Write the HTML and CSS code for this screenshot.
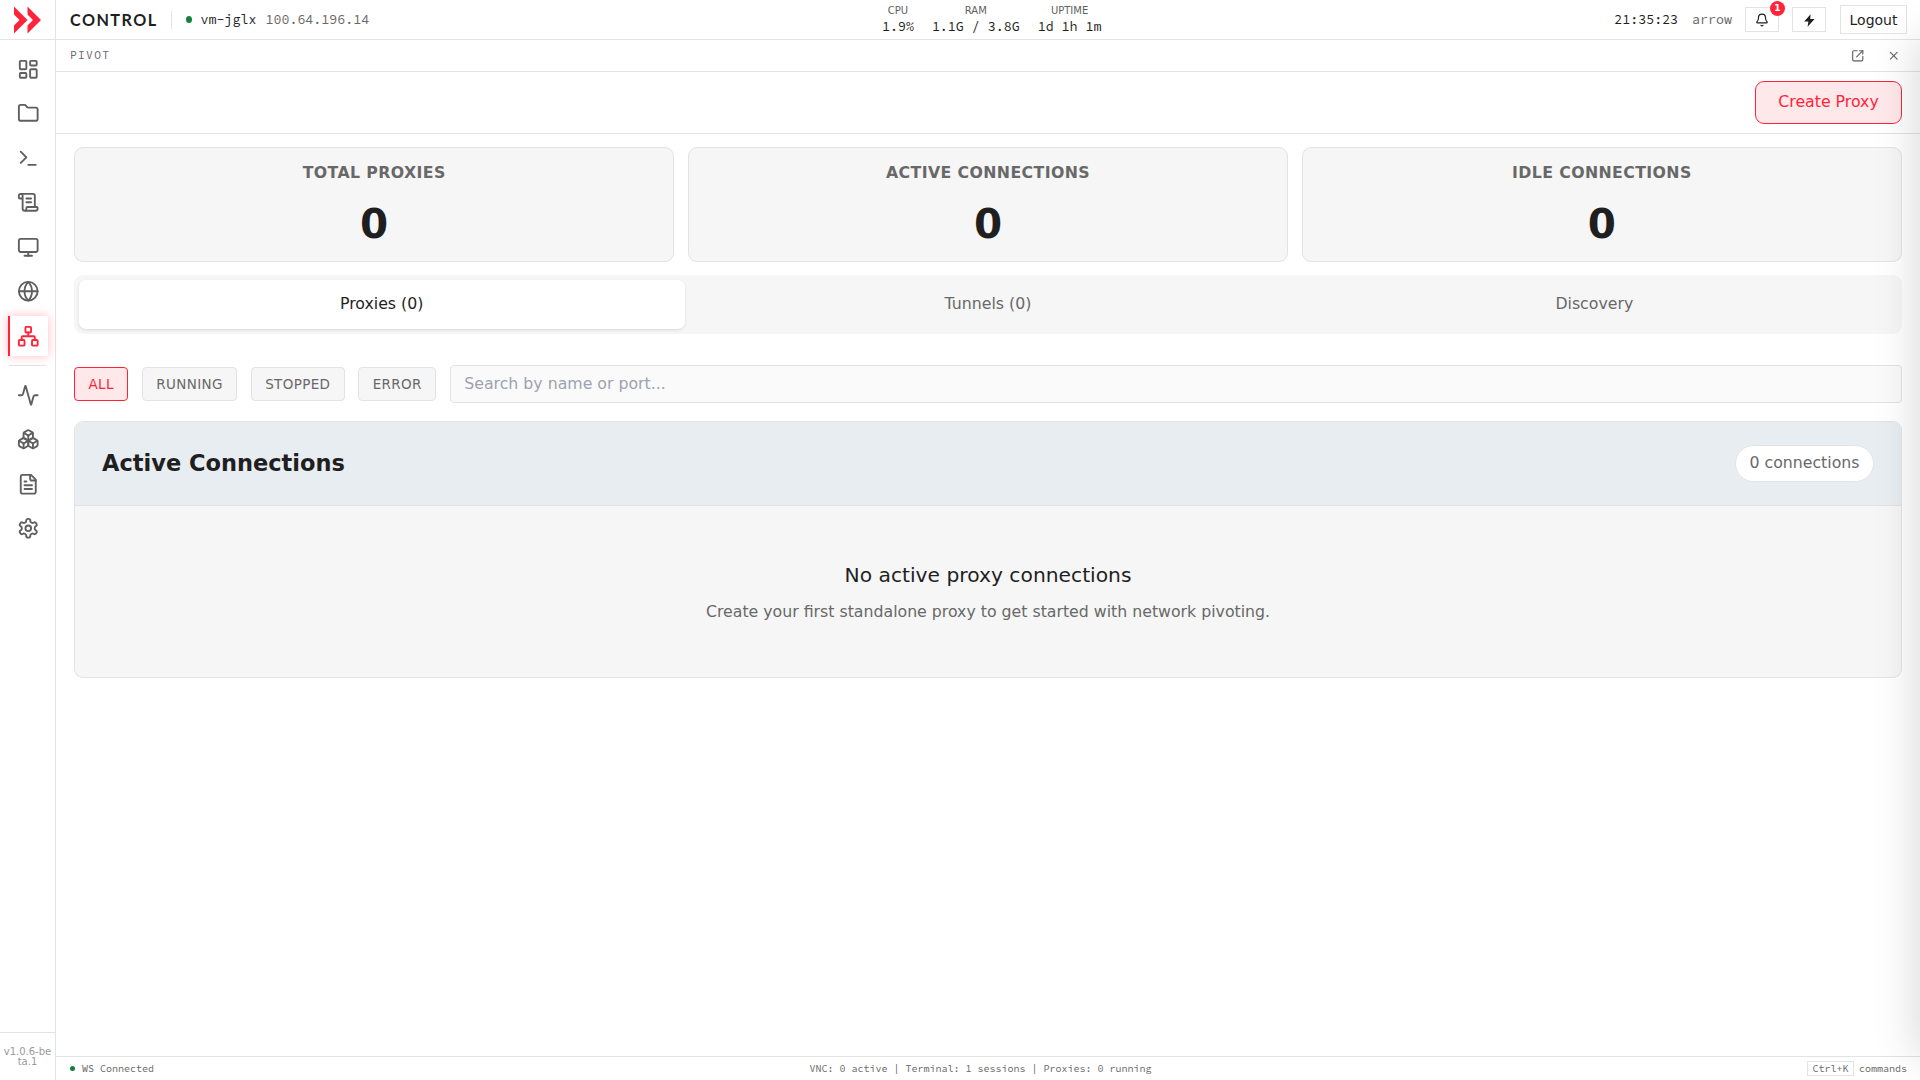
FILE: index.html
```html
<!DOCTYPE html>
<html lang="en">
<head>
    <meta charset="UTF-8">
    <meta name="viewport" content="width=device-width, initial-scale=1.0">
    <title>Control - Pivot</title>
    <link rel="stylesheet" href="styles.css">
</head>
<body>

<div class="app">
    <aside class="sidebar">
        <div class="logo">
            <svg width="28" height="28" viewBox="0 0 28 28" fill="#ff2439"><path d="M0 0.5L13.5 14L0 27.5V19.5L5.5 14L0 8.5Z"/><path d="M13.5 0.5L27 14L13.5 27.5V19.5L19 14L13.5 8.5Z"/></svg>
        </div>
        <nav class="nav">
            <a class="nav-item"><svg class="icon" viewBox="0 0 24 24"><rect width="7" height="9" x="3" y="3" rx="1"/><rect width="7" height="5" x="14" y="3" rx="1"/><rect width="7" height="9" x="14" y="12" rx="1"/><rect width="7" height="5" x="3" y="16" rx="1"/></svg></a>
            <a class="nav-item"><svg class="icon" viewBox="0 0 24 24"><path d="M20 20a2 2 0 0 0 2-2V8a2 2 0 0 0-2-2h-7.9a2 2 0 0 1-1.69-.9L9.6 3.9A2 2 0 0 0 7.93 3H4a2 2 0 0 0-2 2v13a2 2 0 0 0 2 2Z"/></svg></a>
            <a class="nav-item"><svg class="icon" viewBox="0 0 24 24"><path d="m4 17 6-6-6-6"/><path d="M12 19h8"/></svg></a>
            <a class="nav-item"><svg class="icon" viewBox="0 0 24 24"><path d="M15 12h-5"/><path d="M15 8h-5"/><path d="M19 17V5a2 2 0 0 0-2-2H4"/><path d="M8 21h12a2 2 0 0 0 2-2v-1a1 1 0 0 0-1-1H11a1 1 0 0 0-1 1v1a2 2 0 1 1-4 0V5a2 2 0 1 0-4 0v2a1 1 0 0 0 1 1h3"/></svg></a>
            <a class="nav-item"><svg class="icon" viewBox="0 0 24 24"><rect width="20" height="14" x="2" y="3" rx="2"/><path d="M8 21h8"/><path d="M12 17v4"/></svg></a>
            <a class="nav-item"><svg class="icon" viewBox="0 0 24 24"><circle cx="12" cy="12" r="10"/><path d="M12 2a14.5 14.5 0 0 0 0 20 14.5 14.5 0 0 0 0-20"/><path d="M2 12h20"/></svg></a>
            <a class="nav-item active"><svg class="icon" viewBox="0 0 24 24"><rect x="16" y="16" width="6" height="6" rx="1"/><rect x="2" y="16" width="6" height="6" rx="1"/><rect x="9" y="2" width="6" height="6" rx="1"/><path d="M5 16v-3a1 1 0 0 1 1-1h12a1 1 0 0 1 1 1v3"/><path d="M12 12V8"/></svg></a>
            <div class="nav-divider"></div>
            <a class="nav-item"><svg class="icon" viewBox="0 0 24 24"><path d="M22 12h-2.48a2 2 0 0 0-1.93 1.46l-2.35 8.36a.25.25 0 0 1-.48 0L9.24 2.18a.25.25 0 0 0-.48 0l-2.35 8.36A2 2 0 0 1 4.49 12H2"/></svg></a>
            <a class="nav-item"><svg class="icon" viewBox="0 0 24 24"><path d="M2.97 12.92A2 2 0 0 0 2 14.63v3.24a2 2 0 0 0 .97 1.71l3 1.8a2 2 0 0 0 2.06 0L12 19v-5.5l-5-3-4.03 2.42Z"/><path d="m7 16.5-4.74-2.85"/><path d="m7 16.5 5-3"/><path d="M7 16.5v5.17"/><path d="M12 13.5V19l3.97 2.38a2 2 0 0 0 2.06 0l3-1.8a2 2 0 0 0 .97-1.71v-3.24a2 2 0 0 0-.97-1.71L17 10.5l-5 3Z"/><path d="m17 16.5-5-3"/><path d="m17 16.5 4.74-2.85"/><path d="M17 16.5v5.17"/><path d="M7.97 4.42A2 2 0 0 0 7 6.13v4.37l5 3 5-3V6.13a2 2 0 0 0-.97-1.71l-3-1.8a2 2 0 0 0-2.06 0l-3 1.8Z"/><path d="M12 8 7.26 5.15"/><path d="m12 8 4.74-2.85"/><path d="M12 13.5V8"/></svg></a>
            <a class="nav-item"><svg class="icon" viewBox="0 0 24 24"><path d="M15 2H6a2 2 0 0 0-2 2v16a2 2 0 0 0 2 2h12a2 2 0 0 0 2-2V7Z"/><path d="M14 2v4a2 2 0 0 0 2 2h4"/><path d="M10 9H8"/><path d="M16 13H8"/><path d="M16 17H8"/></svg></a>
            <a class="nav-item"><svg class="icon" viewBox="0 0 24 24"><path d="M12.22 2h-.44a2 2 0 0 0-2 2v.18a2 2 0 0 1-1 1.73l-.43.25a2 2 0 0 1-2 0l-.15-.08a2 2 0 0 0-2.73.73l-.22.38a2 2 0 0 0 .73 2.73l.15.1a2 2 0 0 1 1 1.72v.51a2 2 0 0 1-1 1.74l-.15.09a2 2 0 0 0-.73 2.73l.22.38a2 2 0 0 0 2.73.73l.15-.08a2 2 0 0 1 2 0l.43.25a2 2 0 0 1 1 1.73V20a2 2 0 0 0 2 2h.44a2 2 0 0 0 2-2v-.18a2 2 0 0 1 1-1.73l.43-.25a2 2 0 0 1 2 0l.15.08a2 2 0 0 0 2.73-.73l.22-.39a2 2 0 0 0-.73-2.73l-.15-.08a2 2 0 0 1-1-1.74v-.5a2 2 0 0 1 1-1.74l.15-.09a2 2 0 0 0 .73-2.73l-.22-.38a2 2 0 0 0-2.73-.73l-.15.08a2 2 0 0 1-2 0l-.43-.25a2 2 0 0 1-1-1.73V4a2 2 0 0 0-2-2z"/><circle cx="12" cy="12" r="3"/></svg></a>
        </nav>
        <div class="version">v1.0.6-beta.1</div>
    </aside>

    <div class="main">
        <header class="topbar">
            <div class="topbar-left">
                <span class="brand">CONTROL</span>
                <span class="separator"></span>
                <span class="status-dot"></span>
                <span class="hostname">vm-jglx</span>
                <span class="ip">100.64.196.14</span>
            </div>
            <div class="stats">
                <div class="stat"><span class="stat-label">CPU</span><span class="stat-value">1.9%</span></div>
                <div class="stat"><span class="stat-label">RAM</span><span class="stat-value">1.1G / 3.8G</span></div>
                <div class="stat"><span class="stat-label">UPTIME</span><span class="stat-value">1d 1h 1m</span></div>
            </div>
            <div class="topbar-right">
                <span class="clock">21:35:23</span>
                <span class="user">arrow</span>
                <button class="icon-btn bell-btn">
                    <svg class="icon" viewBox="0 0 24 24"><path d="M10.268 21a2 2 0 0 0 3.464 0"/><path d="M3.262 15.326A1 1 0 0 0 4 17h16a1 1 0 0 0 .74-1.673C19.41 13.956 18 12.499 18 8A6 6 0 0 0 6 8c0 4.499-1.411 5.956-2.738 7.326"/></svg>
                    <span class="badge">1</span>
                </button>
                <button class="icon-btn bolt-btn">
                    <svg width="12" height="14" viewBox="0 0 12 14" fill="#1f1f1f"><path d="M7.6 1.3L1.2 8.5H5.4L4.6 13.7L11.6 6.1H7.2Z"/></svg>
                </button>
                <button class="logout-btn">Logout</button>
            </div>
        </header>

        <div class="panel-bar">
            <span class="panel-title">PIVOT</span>
            <div class="panel-actions">
                <svg class="icon" viewBox="0 0 24 24"><path d="M15 3h6v6"/><path d="M10 14 21 3"/><path d="M21 13v6a2 2 0 0 1-2 2H5a2 2 0 0 1-2-2V5a2 2 0 0 1 2-2h6"/></svg>
                <svg class="icon" viewBox="0 0 24 24"><path d="M18 6 6 18"/><path d="m6 6 12 12"/></svg>
            </div>
        </div>

        <div class="toolbar">
            <button class="create-btn">Create Proxy</button>
        </div>

        <main class="content">
            <div class="cards">
                <div class="card"><div class="card-label">TOTAL PROXIES</div><div class="card-value">0</div></div>
                <div class="card"><div class="card-label">ACTIVE CONNECTIONS</div><div class="card-value">0</div></div>
                <div class="card"><div class="card-label">IDLE CONNECTIONS</div><div class="card-value">0</div></div>
            </div>

            <div class="tabs">
                <button class="tab active">Proxies (0)</button>
                <button class="tab">Tunnels (0)</button>
                <button class="tab">Discovery</button>
            </div>

            <div class="filters">
                <button class="filter active">ALL</button>
                <button class="filter">RUNNING</button>
                <button class="filter">STOPPED</button>
                <button class="filter">ERROR</button>
                <input type="text" class="search" placeholder="Search by name or port...">
            </div>

            <section class="connections">
                <div class="connections-header">
                    <h2>Active Connections</h2>
                    <span class="count">0 connections</span>
                </div>
                <div class="empty">
                    <h3>No active proxy connections</h3>
                    <p>Create your first standalone proxy to get started with network pivoting.</p>
                </div>
            </section>
        </main>

        <footer class="statusbar">
            <div class="ws"><span class="ws-dot"></span>WS Connected</div>
            <div class="summary">VNC: 0 active | Terminal: 1 sessions | Proxies: 0 running</div>
            <div class="hint"><kbd>Ctrl+K</kbd>commands</div>
        </footer>
    </div>
</div>

<!-- Closed drawer, parked past the right edge -->
<div class="drawer"></div>

</body>
</html>
```

FILE: styles.css
```css
* {
    box-sizing: border-box;
}

body {
    margin: 0;
    font-family: "DejaVu Sans", sans-serif;
    font-size: 15.75px;
    color: #1f1f1f;
    background: #fff;
    overflow: hidden;
}

button, input {
    font-family: inherit;
    color: inherit;
}

.app {
    display: flex;
    height: 100vh;
}

.icon {
    fill: none;
    stroke: currentColor;
    stroke-width: 2;
    stroke-linecap: round;
    stroke-linejoin: round;
}

/* Sidebar */
.sidebar {
    width: 56px;
    display: flex;
    flex-direction: column;
    border-right: 1px solid #e3e3e3;
    color: #5f5f5f;
}

.logo {
    height: 40px;
    display: flex;
    justify-content: center;
    align-items: center;
    border-bottom: 1px solid #e3e3e3;
}

.nav {
    flex: 1;
    display: flex;
    flex-direction: column;
    align-items: center;
    gap: 4.5px;
    padding-top: 9px;
}

.nav-item {
    width: 40px;
    height: 40px;
    display: flex;
    justify-content: center;
    align-items: center;
    border-left: 2px solid transparent;
    padding-right: 1px;
}

.nav-item .icon {
    width: 22.5px;
    height: 22.5px;
}

.nav-item.active {
    color: #ff2439;
    background: #fff;
    border-left-color: #ff2439;
    box-shadow: 0 0 10px rgba(255, 36, 57, 0.3);
}

.nav-divider {
    width: 37px;
    height: 1px;
    margin: 4.5px 0;
    background: #e3e3e3;
}

.version {
    height: 48px;
    padding: 14px 3px 0;
    border-top: 1px solid #e3e3e3;
    font-size: 10px;
    line-height: 10px;
    text-align: center;
    word-break: break-all;
    color: #9a9a9a;
}

/* Top bar */
.main {
    flex: 1;
    display: flex;
    flex-direction: column;
    min-width: 0;
}

.topbar {
    height: 40px;
    display: flex;
    justify-content: space-between;
    align-items: center;
    padding: 0 13px 0 14px;
    border-bottom: 1px solid #e3e3e3;
    font-family: "Source Code Pro", "Liberation Mono", monospace;
    font-size: 13.3px;
}

.topbar-left {
    display: flex;
    align-items: center;
}

.brand {
    font-family: Lato, sans-serif;
    font-size: 16.2px;
    font-weight: 700;
    letter-spacing: 1.45px;
    padding-bottom: 1px;
}

.separator {
    width: 1px;
    height: 18px;
    margin: 0 14px 0 13px;
    background: #e3e3e3;
}

.status-dot {
    width: 6px;
    height: 7px;
    border-radius: 50%;
    background: #15803d;
    margin-right: 9px;
}

.ip {
    margin-left: 9px;
    color: #686868;
}

.stats {
    display: flex;
    gap: 18px;
}

.stat {
    display: flex;
    flex-direction: column;
    align-items: center;
}

.stat-label {
    font-family: "DejaVu Sans", sans-serif;
    font-size: 10px;
    line-height: 14px;
    color: #5f5f5f;
}

.stat-value {
    line-height: 18px;
}

.topbar-right {
    display: flex;
    justify-content: flex-end;
    align-items: center;
}

.user {
    margin: 0 13px 0 14px;
    color: #686868;
}

.icon-btn {
    position: relative;
    width: 34px;
    height: 25px;
    display: flex;
    justify-content: center;
    align-items: center;
    padding: 0;
    margin-right: 13.5px;
    border: 1px solid #e3e3e3;
    background: #fff;
}

.icon-btn .icon {
    width: 14px;
    height: 14px;
}

.badge {
    position: absolute;
    top: -7px;
    right: -7px;
    width: 15px;
    height: 15px;
    border-radius: 50%;
    background: #ff2439;
    color: #fff;
    font-family: "DejaVu Sans", sans-serif;
    font-size: 9px;
    font-weight: 700;
    line-height: 14px;
    text-align: center;
}

.logout-btn {
    width: 67px;
    height: 29px;
    padding: 0;
    border: 1px solid #e3e3e3;
    background: #fff;
    font-family: "DejaVu Sans", sans-serif;
    font-size: 14px;
}

/* Panel title bar */
.panel-bar {
    height: 32px;
    display: flex;
    justify-content: space-between;
    align-items: center;
    padding: 0 20px 0 14px;
    border-bottom: 1px solid #e3e3e3;
}

.panel-title {
    padding-bottom: 2px;
    font-family: "Source Code Pro", "Liberation Mono", monospace;
    font-size: 11.25px;
    letter-spacing: 1.3px;
    color: #686868;
}

.panel-actions {
    display: flex;
    gap: 22.5px;
    color: #5f5f5f;
}

.panel-actions .icon {
    width: 13.5px;
    height: 13.5px;
}

.toolbar {
    height: 62px;
    display: flex;
    justify-content: flex-end;
    align-items: center;
    padding: 0 18px;
    border-bottom: 1px solid #e3e3e3;
}

.create-btn {
    width: 147px;
    height: 43px;
    padding: 0 0 2px;
    border: 1px solid #ff2439;
    border-radius: 9px;
    background: #ffe8ea;
    color: #ff2439;
    font-size: 15.75px;
}

/* Content */
.content {
    flex: 1;
    padding: 13px 18px 0;
}

.cards {
    display: grid;
    grid-template-columns: repeat(3, 1fr);
    gap: 13.5px;
}

.card {
    height: 115px;
    padding-top: 14px;
    border: 1px solid #e3e3e3;
    border-radius: 9px;
    background: #f6f6f6;
    text-align: center;
}

.card-label {
    font-size: 15.75px;
    font-weight: 700;
    line-height: 22px;
    letter-spacing: 0.39px;
    color: #686868;
}

.card-value {
    margin-top: 15px;
    font-size: 40.5px;
    font-weight: 700;
    line-height: 50px;
}

.tabs {
    display: flex;
    height: 59px;
    margin-top: 13px;
    padding: 5px 4.5px;
    border-radius: 9px;
    background: #f6f6f6;
}

.tab {
    flex: 1;
    padding: 0 0 2px;
    border: none;
    border-radius: 7px;
    background: none;
    color: #686868;
    font-size: 15.75px;
}

.tab.active {
    background: #fff;
    color: #1f1f1f;
    box-shadow: 0 1px 3px rgba(0, 0, 0, 0.12);
}

.filters {
    display: flex;
    align-items: center;
    gap: 13.5px;
    margin-top: 31px;
}

.filter {
    height: 34px;
    padding: 0 13.5px;
    border: 1px solid #e3e3e3;
    border-radius: 4px;
    background: #f6f6f6;
    color: #686868;
    font-size: 13.5px;
    letter-spacing: 0.34px;
}

.filter.active {
    border-color: #ff2439;
    background: #ffe8ea;
    color: #ff2439;
}

.search {
    flex: 1;
    height: 38px;
    padding: 0 13.5px 1px;
    border: 1px solid #e3e3e3;
    border-radius: 4px;
    background: #fafafa;
    font-size: 15.75px;
}

.search::placeholder {
    color: #9ca3af;
}

.connections {
    height: 257px;
    margin-top: 18px;
    border: 1px solid #e3e3e3;
    border-radius: 9px;
    background: #f6f6f6;
    overflow: hidden;
}

.connections-header {
    height: 84px;
    display: flex;
    justify-content: space-between;
    align-items: center;
    padding: 0 27px;
    border-bottom: 1px solid #e3e3e3;
    background: #e8edf1;
}

.connections-header h2 {
    margin: 0 0 2px;
    font-size: 22.5px;
}

.count {
    height: 37px;
    padding: 0 13.5px;
    border: 1px solid #e3e3e3;
    border-radius: 19px;
    background: #fff;
    color: #686868;
    font-size: 15.75px;
    line-height: 33px;
}

.empty {
    padding-top: 54px;
    text-align: center;
}

.empty h3 {
    margin: 0;
    font-size: 20.25px;
    font-weight: 400;
    line-height: 30px;
}

.empty p {
    margin: 10px 0 0;
    font-size: 15.75px;
    line-height: 24px;
    color: #686868;
}

/* Status bar */
.statusbar {
    height: 24px;
    display: flex;
    justify-content: space-between;
    align-items: center;
    padding: 0 13px 0 14px;
    border-top: 1px solid #e3e3e3;
    font-family: "Source Code Pro", "Liberation Mono", monospace;
    font-size: 10px;
    color: #686868;
}

.ws {
    display: flex;
    align-items: center;
    gap: 7px;
}

.ws-dot {
    width: 5px;
    height: 5px;
    border-radius: 50%;
    background: #15803d;
}

.hint {
    display: flex;
    justify-content: flex-end;
    align-items: center;
    gap: 5px;
}

kbd {
    padding: 0 4.5px;
    border: 1px solid #e3e3e3;
    font-family: inherit;
    font-size: 10px;
    line-height: 13px;
}

.drawer {
    position: fixed;
    top: 40px;
    bottom: 24px;
    left: 100%;
    width: 400px;
    background: #fff;
    box-shadow: -4px 0 40px rgba(0, 0, 0, 0.15);
}
```
